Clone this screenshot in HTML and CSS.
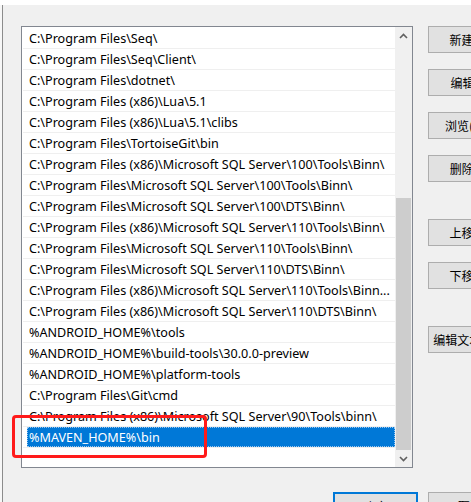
FILE: index.html
```html
<!DOCTYPE html>
<html lang="zh-CN">
<head>
<meta charset="utf-8">
<link rel="stylesheet" href="styles.css">
</head>
<body>
<div class="topstrip"></div>
<div class="content">
  <div class="edge"></div>
  <div class="dialog">
    <div class="row">
      <div class="listbox">
        <div class="items">
          <div class="item"><span class="label">C:\Program Files\Seq\</span></div>
          <div class="item"><span class="label">C:\Program Files\Seq\Client\</span></div>
          <div class="item"><span class="label">C:\Program Files\dotnet\</span></div>
          <div class="item"><span class="label">C:\Program Files (x86)\Lua\5.1</span></div>
          <div class="item"><span class="label">C:\Program Files (x86)\Lua\5.1\clibs</span></div>
          <div class="item"><span class="label">C:\Program Files\TortoiseGit\bin</span></div>
          <div class="item"><span class="label">C:\Program Files (x86)\Microsoft SQL Server\100\Tools\Binn\</span></div>
          <div class="item"><span class="label">C:\Program Files\Microsoft SQL Server\100\Tools\Binn\</span></div>
          <div class="item"><span class="label">C:\Program Files\Microsoft SQL Server\100\DTS\Binn\</span></div>
          <div class="item"><span class="label">C:\Program Files (x86)\Microsoft SQL Server\110\Tools\Binn\</span></div>
          <div class="item"><span class="label">C:\Program Files\Microsoft SQL Server\110\Tools\Binn\</span></div>
          <div class="item"><span class="label">C:\Program Files\Microsoft SQL Server\110\DTS\Binn\</span></div>
          <div class="item"><span class="label">C:\Program Files (x86)\Microsoft SQL Server\110\Tools\Binn...</span></div>
          <div class="item"><span class="label">C:\Program Files (x86)\Microsoft SQL Server\110\DTS\Binn\</span></div>
          <div class="item"><span class="label">%ANDROID_HOME%\tools</span></div>
          <div class="item"><span class="label">%ANDROID_HOME%\build-tools\30.0.0-preview</span></div>
          <div class="item"><span class="label">%ANDROID_HOME%\platform-tools</span></div>
          <div class="item"><span class="label">C:\Program Files\Git\cmd</span></div>
          <div class="item"><span class="label">C:\Program Files (x86)\Microsoft SQL Server\90\Tools\binn\</span></div>
          <div class="item selected"><span class="label">%MAVEN_HOME%\bin</span></div>
        </div>
        <div class="scrollbar">
          <div class="arrow">
            <svg width="9" height="6" viewBox="0 0 9 6"><path d="M1 5 L4.5 1.5 L8 5" fill="none" stroke="#606060" stroke-width="1.6"/></svg>
          </div>
          <div class="track"><div class="thumb"></div></div>
          <div class="arrow">
            <svg width="9" height="6" viewBox="0 0 9 6"><path d="M1 1 L4.5 4.5 L8 1" fill="none" stroke="#606060" stroke-width="1.6"/></svg>
          </div>
        </div>
      </div>
      <div class="side">
        <button class="btn">新建(N)</button>
        <button class="btn">编辑(E)</button>
        <button class="btn">浏览(B)...</button>
        <button class="btn">删除(D)</button>
        <button class="btn gap-big">上移(U)</button>
        <button class="btn">下移(O)</button>
        <button class="btn gap-more">编辑文本(T)...</button>
      </div>
    </div>
    <div class="footer">
      <button class="btn default">确定</button>
      <button class="btn">取消</button>
    </div>
  </div>
</div>
<div class="highlight"></div>
</body>
</html>
```

FILE: styles.css
```css
html, body {
  margin: 0;
  padding: 0;
}
body {
  width: 471px;
  height: 502px;
  overflow: hidden;
  background: #f0f0f0;
  font-family: "Noto Sans", "Noto Sans CJK SC", sans-serif;
  font-size: 12.6px;
  color: #000;
  position: relative;
  display: flex;
  flex-direction: column;
}
.topstrip {
  height: 5px;
  background: #ffffff;
  flex: none;
}
.content {
  flex: 1;
  display: flex;
}
.edge {
  width: 2px;
  background: #f7f7f7;
  border-right: 1px solid #8c8c8c;
  flex: none;
}
.dialog {
  padding-left: 18px;
  padding-top: 21px;
  display: flex;
  flex-direction: column;
}
.row {
  display: flex;
  align-items: flex-start;
}
.listbox {
  width: 390px;
  height: 440px;
  border: 1px solid #828790;
  background: #fff;
  display: flex;
  flex: none;
}
.items {
  width: 372px;
  padding-top: 1px;
  padding-left: 1px;
  flex: none;
}
.item {
  height: 20px;
  border-bottom: 1px solid #efefef;
  padding-left: 4px;
  display: flex;
}
.label {
  flex: 1;
  padding-left: 2px;
  line-height: 21px;
  white-space: nowrap;
  overflow: hidden;
}
.item.selected .label {
  background: #0078d7;
  color: #fff;
  outline: 1px dotted #9cc8ef;
  outline-offset: -1px;
}
.scrollbar {
  width: 17px;
  background: #f0f0f0;
  display: flex;
  flex-direction: column;
  flex: none;
}
.arrow {
  height: 17px;
  display: flex;
  align-items: center;
  justify-content: center;
  flex: none;
}
.track {
  flex: 1;
  display: flex;
  flex-direction: column;
  justify-content: flex-end;
  padding: 0 1px;
}
.thumb {
  height: 252px;
  background: #cdcdcd;
}
.side {
  margin-left: 15px;
  display: flex;
  flex-direction: column;
  gap: 16px;
}
.btn {
  font-family: "Noto Sans CJK SC", "Noto Sans", sans-serif;
  font-size: 12px;
  color: #000;
  background: #e1e1e1;
  border: 1px solid #adadad;
  width: 84px;
  height: 27px;
  padding: 0;
  margin: 0;
  text-align: center;
  white-space: nowrap;
  flex: none;
  line-height: 25px;
}
.btn.gap-big {
  margin-top: 21px;
}
.btn.gap-more {
  margin-top: 21px;
}
.footer {
  margin-top: 24px;
  margin-left: 312px;
  display: flex;
  gap: 10px;
}
.btn.default {
  width: 85px;
  border: 2px solid #0078d7;
}
.highlight {
  position: absolute;
  left: 12px;
  top: 415px;
  width: 189px;
  height: 37px;
  border: 3px solid #ff1a1a;
  border-radius: 4px;
}
```
